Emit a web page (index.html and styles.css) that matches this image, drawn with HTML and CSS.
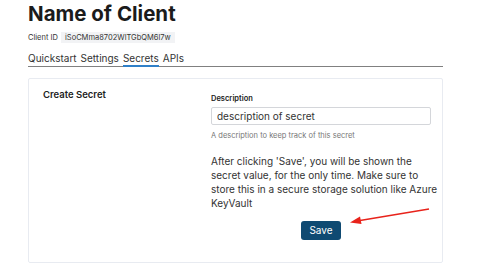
FILE: index.html
```html
<!DOCTYPE html>
<html lang="en">
<head>
  <meta charset="UTF-8" />
  <title>Name of Client</title>
  <link rel="stylesheet" href="styles.css">
</head>
<body>
  <div class="page">
    <h1 class="client-name">Name of Client</h1>
    <div class="client-id">Client ID <span class="client-id-value">iSoCMma8702WlTGbQM6l7w</span></div>

    <nav class="tabs">
      <a href="#">Quickstart</a>
      <a href="#">Settings</a>
      <a href="#" class="active">Secrets</a>
      <a href="#">APIs</a>
    </nav>

    <section class="card">
      <h2 class="card-title">Create Secret</h2>
      <div class="form">
        <label class="label" for="desc">Description</label>
        <input id="desc" class="input" type="text" value="description of secret" />
        <div class="help">A description to keep track of this secret</div>
        <p class="note">After clicking 'Save', you will be shown the<br>secret value, for the only time. Make sure to<br>store this in a secure storage solution like Azure KeyVault</p>
        <div class="actions">
          <button class="btn">Save</button>
          <!-- annotation arrow -->
          <svg class="arrow" width="82" height="18" viewBox="0 0 82 18">
            <line x1="80" y1="1" x2="8" y2="13" stroke="#e8231b" stroke-width="1.6" />
            <polygon points="1,14.5 11,8.5 12.5,16" fill="#e8231b" />
          </svg>
        </div>
      </div>
    </section>
  </div>
</body>
</html>
```

FILE: styles.css
```css
* {
  box-sizing: border-box;
}

body {
  margin: 0;
  background: #fff;
  color: #222;
  font-family: 'Inter', 'Liberation Sans', Arial, sans-serif;
}

.page {
  width: 443px;
  padding-left: 28px;
}

.client-name {
  margin: 0;
  font-size: 20.5px;
  line-height: 28px;
  font-weight: 700;
  color: #1b1b1b;
}

.client-id {
  margin-top: 4px;
  font-size: 7.5px;
  line-height: 11px;
  color: #333;
}
.client-id-value {
  display: inline-block;
  background: #f2f3f5;
  padding: 0 4px;
  margin-left: 1px;
}

/* tabs */
.tabs {
  display: flex;
  gap: 4px;
  margin-top: 9px;
  border-bottom: 1.5px solid #808080;
}
.tabs a {
  color: #333;
  font-size: 10px;
  line-height: 12px;
  padding-bottom: 1px;
  text-decoration: none;
  border-bottom: 2px solid transparent;
  margin-bottom: -1.5px;
}
.tabs a.active {
  border-bottom-color: #2f80c8;
}

/* card */
.card {
  margin-top: 11px;
  border: 1px solid #e8ebf1;
  border-radius: 2px;
  height: 185px;
  display: grid;
  grid-template-columns: 168px 1fr;
  padding: 9px 12px 0 14px;
}

.card-title {
  margin: 0;
  font-size: 9.5px;
  font-weight: 600;
  color: #222;
  line-height: 14px;
}

.form {
  padding-top: 5px;
}
.label {
  display: block;
  font-size: 7.5px;
  font-weight: 600;
  color: #222;
  line-height: 11px;
}
.input {
  display: block;
  width: 220px;
  height: 18px;
  margin-top: 3px;
  border: 1px solid #d4d6da;
  border-radius: 2px;
  padding: 0 5px;
  font-family: inherit;
  font-size: 10px;
  color: #333;
}
.help {
  margin-top: 5px;
  font-size: 7.5px;
  color: #777;
  line-height: 11px;
}
.note {
  margin: 13px 0 0;
  font-size: 10px;
  line-height: 14px;
  color: #333;
  width: 245px;
}

.actions {
  position: relative;
  display: flex;
  justify-content: center;
  width: 220px;
  margin-top: 11px;
}
.btn {
  background: #0f4a72;
  color: #fff;
  border: none;
  border-radius: 3px;
  font-family: inherit;
  font-size: 10px;
  height: 19px;
  padding: 0 8px;
}
.arrow {
  position: absolute;
  left: 138px;
  top: -13px;
}
```
